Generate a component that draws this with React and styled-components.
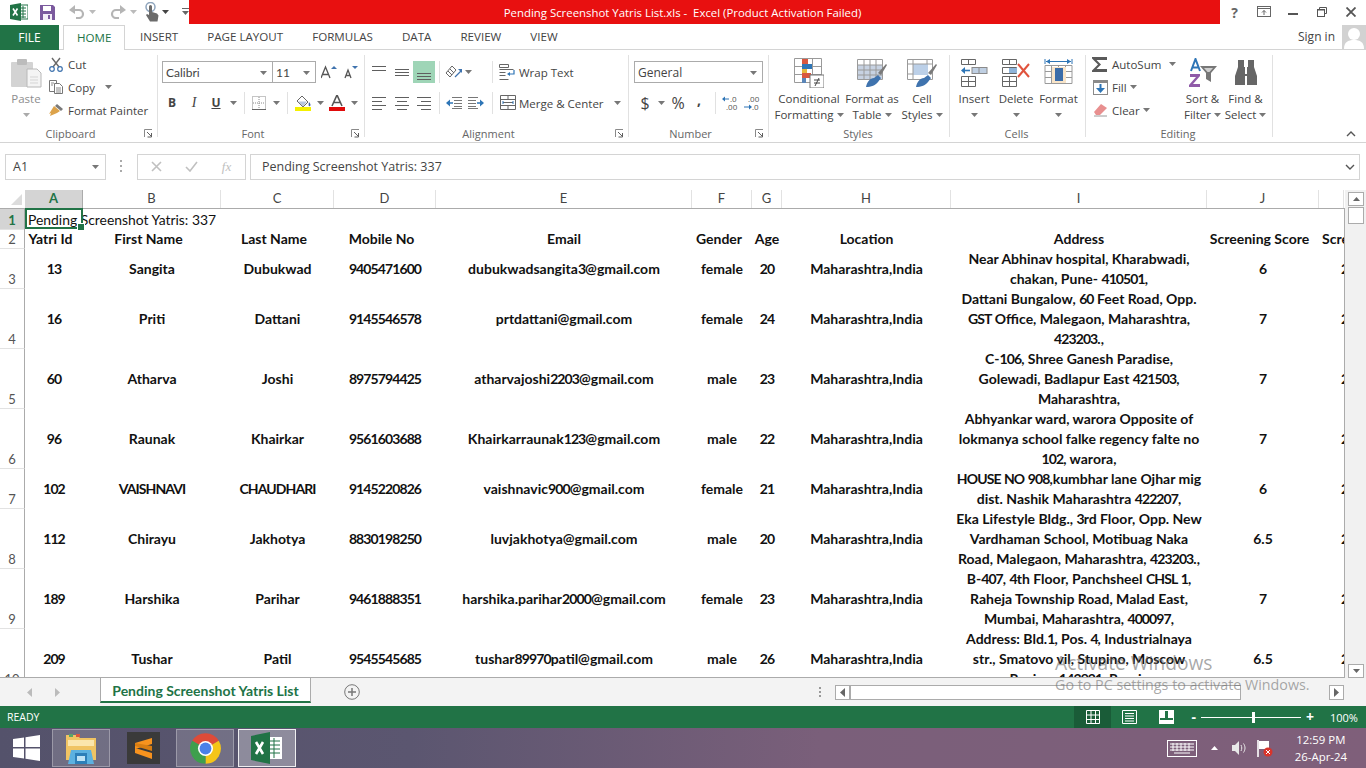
import React from 'react';
import styled, { createGlobalStyle } from 'styled-components';

const GREEN = '#217346';
const UI_FONT = '"Open Sans", "Noto Sans", sans-serif';
const CELL_FONT = 'Lato, "Liberation Sans", sans-serif';

const GlobalStyle = createGlobalStyle`
    html, body {
        margin: 0;
        padding: 0;
        background: #fff;
        overflow: hidden;
    }
    * {
        box-sizing: border-box;
    }
    svg {
        display: block;
        flex: none;
    }
`;

const Page = styled.div`
    position: relative;
    display: flex;
    flex-direction: column;
    width: 1366px;
    height: 768px;
    overflow: hidden;
    font-family: ${UI_FONT};
    font-size: 11.5px;
    color: #444;
`;

/* title bar */
const TitleBar = styled.div`
    display: flex;
    height: 25px;
`;

const QuickAccess = styled.div`
    display: flex;
    align-items: center;
    width: 189px;
    padding-left: 10px;
`;

const QuickSlot = styled.div`
    display: flex;
    justify-content: center;
    width: ${(p) => p.$w}px;
    margin-left: ${(p) => p.$ml || 0}px;
`;

const RedTitle = styled.div`
    width: 1031px;
    height: 24px;
    padding-right: 44px;
    background: #e81010;
    color: #fff;
    font-size: 11.4px;
    line-height: 26px;
    text-align: center;
    white-space: pre;
`;

const WindowButtons = styled.div`
    display: flex;
    align-items: center;
`;

const WindowButton = styled.div`
    display: flex;
    justify-content: center;
    width: 29px;
`;

/* tabs */
const TabBar = styled.div`
    display: flex;
    align-items: stretch;
    height: 25px;
    border-bottom: 1px solid #d4d4d4;
`;

const FileTab = styled.div`
    width: 59px;
    height: 25px;
    background: ${GREEN};
    color: #fff;
    font-size: 12px;
    line-height: 25px;
    text-align: center;
`;

const Tab = styled.div`
    height: 25px;
    padding: 0 ${(p) => (p.$active ? 13 : 14.5)}px;
    line-height: 24px;
    font-size: 11.6px;
    white-space: nowrap;
    color: ${(p) => (p.$active ? GREEN : '#444')};
    background: ${(p) => (p.$active ? '#fff' : 'transparent')};
    border: solid #d4d4d4;
    border-width: ${(p) => (p.$active ? '1px 1px 0 1px' : '0')};
    margin-left: ${(p) => p.$ml || 0}px;
`;

const SignIn = styled.div`
    display: flex;
    align-items: center;
    gap: 7px;
    margin-left: auto;
    font-size: 12px;
`;

/* ribbon */
const Ribbon = styled.div`
    display: flex;
    height: 93px;
    border-bottom: 1px solid #d4d4d4;
`;

const Group = styled.div`
    display: flex;
    flex-direction: column;
    width: ${(p) => p.$w}px;
    padding-top: 3px;
`;

const GroupBody = styled.div`
    display: flex;
    height: 73px;
    padding-left: ${(p) => p.$pl || 0}px;
`;

const GroupFooter = styled.div`
    display: grid;
    grid-template-columns: ${(p) => (p.$launcher ? '1fr 14px' : '1fr')};
    align-items: center;
    justify-items: center;
    height: 16px;
    padding-right: 2px;
    color: #666;
    text-align: center;
    font-size: 11px;
`;

const GroupSep = styled.div`
    width: 1px;
    height: 82px;
    margin-top: 5px;
    background: #e1e1e1;
`;

const Collapse = styled.div`
    align-self: flex-end;
    margin: 0 10px 5px auto;
`;

const LargeButton = styled.div`
    display: flex;
    flex-direction: column;
    align-items: center;
    width: ${(p) => p.$w}px;
    padding-top: 5px;
    line-height: 16px;
    white-space: nowrap;
    color: ${(p) => (p.$muted ? '#8e8e8e' : '#444')};
`;

const LargeIcon = styled.div`
    display: flex;
    align-items: center;
    justify-content: center;
    height: 30px;
    margin-bottom: 3px;
`;

const LargeCaption = styled.div`
    display: flex;
    align-items: center;
    justify-content: center;
    height: 16px;
`;

const SmallStack = styled.div`
    display: flex;
    flex-direction: column;
    width: ${(p) => p.$w}px;
`;

const SmallRow = styled.div`
    display: flex;
    align-items: center;
    height: 23px;
    white-space: nowrap;
`;

const SmallIcon = styled.div`
    display: flex;
    justify-content: center;
    width: ${(p) => p.$w || 18}px;
    margin-right: ${(p) => p.$mr || 0}px;
`;

const ToolRows = styled.div`
    display: flex;
    flex-direction: column;
    gap: 9px;
    padding-top: 8px;
`;

const ToolRow = styled.div`
    display: flex;
    align-items: center;
    height: 22px;
    white-space: nowrap;
`;

const Tool = styled.div`
    display: flex;
    align-items: center;
    justify-content: center;
    width: ${(p) => p.$w || 22}px;
    height: 22px;
    margin-left: ${(p) => p.$ml || 0}px;
    padding-bottom: ${(p) => p.$pb || 0}px;
    background: ${(p) => (p.$on ? '#9fd5b7' : 'transparent')};
    color: ${(p) => p.$c || '#444'};
    font-size: ${(p) => p.$fs || 12}px;
    font-weight: ${(p) => (p.$bold ? 700 : 400)};
    font-style: ${(p) => (p.$italic ? 'italic' : 'normal')};
    text-decoration: ${(p) => (p.$under ? 'underline' : 'none')};
    font-family: ${(p) => (p.$serif ? '"Liberation Serif", serif' : 'inherit')};
`;

const ToolSep = styled.div`
    width: 1px;
    height: 22px;
    margin-left: ${(p) => p.$ml || 0}px;
    background: #e1e1e1;
`;

const Slot = styled.div`
    display: flex;
    width: ${(p) => p.$w}px;
    margin-left: ${(p) => p.$ml || 0}px;
`;

const ToolText = styled.span`
    margin-left: ${(p) => p.$ml || 0}px;
    padding-top: 2px;
`;

const Combo = styled.div`
    display: flex;
    align-items: center;
    justify-content: space-between;
    width: ${(p) => p.$w}px;
    height: 22px;
    margin-left: ${(p) => p.$ml || 0}px;
    padding: 2px 5px 0 3px;
    background: #fff;
    border: 1px solid #ababab;
    font-family: ${(p) => (p.$cell ? CELL_FONT : UI_FONT)};
    font-size: 12px;
`;

/* formula bar */
const FormulaRow = styled.div`
    display: flex;
    align-items: flex-start;
    height: 48px;
    padding: 11px 6px 0 5px;
`;

const NameBox = styled.div`
    display: flex;
    align-items: center;
    justify-content: space-between;
    width: 101px;
    height: 26px;
    padding: 0 6px 0 7px;
    border: 1px solid #d4d4d4;
    font-size: 12.5px;
`;

const FormulaDots = styled.div`
    display: flex;
    justify-content: center;
    width: 31px;
    padding-top: 6px;
`;

const FormulaButtons = styled.div`
    display: grid;
    grid-template-columns: repeat(3, 1fr);
    align-items: center;
    justify-items: center;
    width: 109px;
    height: 26px;
    padding: 0 1px;
    border: 1px solid #d4d4d4;
    color: #c0c0c0;
`;

const FxLabel = styled.span`
    font-family: "Liberation Serif", serif;
    font-style: italic;
    font-size: 13px;
`;

const FormulaInput = styled.div`
    flex: 1;
    display: flex;
    align-items: center;
    justify-content: space-between;
    height: 26px;
    margin-left: 4px;
    padding: 0 4px 0 11px;
    border: 1px solid #d4d4d4;
    font-size: 12.5px;
    color: #444;
`;

/* sheet */
const COLUMNS = '25px 58px 138px 113px 102px 256px 60px 30px 169px 256px 112px 25px';

const SheetArea = styled.div`
    display: flex;
    height: 488px;
`;

const GridWrap = styled.div`
    display: flex;
    flex-direction: column;
    width: 1345px;
`;

const HeaderRow = styled.div`
    display: grid;
    grid-template-columns: ${COLUMNS};
    height: 19px;
    flex: none;
    border-bottom: 1px solid #ababab;
`;

const Corner = styled.div`
    display: flex;
    align-items: flex-end;
    justify-content: flex-end;
    padding: 0 3px 3px 0;
`;

const ColHead = styled.div`
    height: 18px;
    line-height: 17px;
    text-align: center;
    font-family: ${CELL_FONT};
    font-size: 13px;
    font-weight: ${(p) => (p.$on ? 700 : 400)};
    color: ${(p) => (p.$on ? GREEN : '#444')};
    background: ${(p) => (p.$on ? '#d4d4d4' : 'transparent')};
    border-right: 1px solid ${(p) => (p.$on ? '#ababab' : '#e2e2e2')};
    box-shadow: ${(p) => (p.$on ? `0 1px 0 ${GREEN}` : 'none')};
`;

const SheetBody = styled.div`
    position: relative;
    flex: 1;
    overflow: hidden;
    background: linear-gradient(#ababab, #ababab) no-repeat 24px 0 / 1px 100%;
    border-right: 1px solid #ababab;
    border-bottom: 1px solid #ababab;
`;

const Row = styled.div`
    display: grid;
    grid-template-columns: ${COLUMNS};
    height: ${(p) => p.$h}px;
`;

const RowHead = styled.div`
    display: flex;
    align-items: flex-end;
    justify-content: center;
    height: 100%;
    line-height: 18px;
    font-family: ${CELL_FONT};
    font-size: 13px;
    font-weight: ${(p) => (p.$on ? 700 : 400)};
    color: ${(p) => (p.$on ? GREEN : '#555')};
    background: ${(p) => (p.$on ? '#d4d4d4' : 'transparent')};
    border-bottom: 1px solid #e2e2e2;
    border-right: 1px solid #ababab;
`;

const Cell = styled.div`
    display: flex;
    align-items: center;
    justify-content: ${(p) => (p.$start ? 'flex-start' : 'center')};
    padding-left: ${(p) => p.$pl || 0}px;
    padding-right: ${(p) => p.$nudge || 0}px;
    overflow: hidden;
    text-align: center;
    white-space: nowrap;
    font-family: ${CELL_FONT};
    font-size: 14px;
    font-weight: 700;
    line-height: 20px;
    color: #111;
`;

/* Lato's digits and capitals run wider than the sheet font's */
const Tight = styled.span`
    letter-spacing: -0.9px;
`;

const TitleCell = styled.div`
    grid-column: 2 / -1;
    padding-left: 3px;
    font-family: ${CELL_FONT};
    font-size: 13.9px;
    line-height: 21px;
    color: #111;
`;

const Selection = styled.div`
    position: absolute;
    left: 25px;
    top: 0;
    width: 58px;
    height: 20px;
    border: 2px solid ${GREEN};
    border-top-width: 1px;
    &::after {
        content: '';
        position: absolute;
        right: -4px;
        bottom: -4px;
        width: 6px;
        height: 6px;
        background: ${GREEN};
        border: 1px solid #fff;
    }
`;

const ScrollCol = styled.div`
    display: flex;
    flex-direction: column;
    width: 21px;
    padding: 2px 2px 0 3px;
    background: #f1f1f1;
`;

const ScrollBtn = styled.div`
    display: flex;
    align-items: center;
    justify-content: center;
    width: 16px;
    height: ${(p) => p.$h || 14}px;
    background: #fff;
    border: 1px solid #ababab;
    margin-top: ${(p) => (p.$end ? 'auto' : '0')};
    margin-bottom: ${(p) => (p.$end ? '0' : '1px')};
`;

/* sheet tabs */
const SheetTabs = styled.div`
    display: flex;
    align-items: flex-start;
    height: 28px;
    background: #f3f3f3;
`;

const NavArrows = styled.div`
    display: flex;
    align-items: center;
    gap: 23px;
    width: 100px;
    height: 28px;
    padding-left: 27px;
`;

const SheetTab = styled.div`
    width: 211px;
    height: 25px;
    background: #fff;
    border: solid #ababab;
    border-width: 0 1px;
    border-bottom: 2px solid ${GREEN};
    color: ${GREEN};
    font-family: ${CELL_FONT};
    font-size: 14px;
    font-weight: 700;
    line-height: 25px;
    text-align: center;
`;

const AddSheet = styled.div`
    margin: 6px 0 0 33px;
`;

const TabDots = styled.div`
    margin: 9px 0 0 459px;
`;

const HScroll = styled.div`
    display: flex;
    align-items: center;
    width: 509px;
    height: 15px;
    margin: 7px 0 0 13px;
`;

const HBtn = styled.div`
    display: flex;
    align-items: center;
    justify-content: center;
    width: 15px;
    height: 15px;
    background: #fff;
    border: 1px solid #ababab;
`;

const HThumb = styled.div`
    width: 391px;
    height: 15px;
    background: #fff;
    border: 1px solid #ababab;
    margin-right: auto;
`;

/* status bar */
const StatusBar = styled.div`
    display: flex;
    align-items: center;
    height: 22px;
    padding-left: 7px;
    background: ${GREEN};
    color: #fff;
    font-size: 10.5px;
`;

const ViewButton = styled.div`
    display: flex;
    align-items: center;
    justify-content: center;
    width: 37px;
    height: 22px;
    margin-left: ${(p) => p.$ml || 0}px;
    background: ${(p) => (p.$on ? '#1a5c38' : 'transparent')};
`;

const ZoomSlider = styled.div`
    display: flex;
    align-items: center;
    gap: 5px;
    margin-left: 6px;
`;

const ZoomTrack = styled.div`
    position: relative;
    width: 100px;
    height: 1px;
    background: #fff;
    &::after {
        content: '';
        position: absolute;
        left: 51px;
        top: -5px;
        width: 3px;
        height: 11px;
        background: #fff;
    }
`;

const ZoomSign = styled.span`
    font-size: 14px;
    line-height: 14px;
    font-weight: 700;
`;

const ZoomValue = styled.span`
    margin-left: 16px;
    font-size: 11px;
`;

/* taskbar */
const Taskbar = styled.div`
    display: flex;
    align-items: center;
    height: 40px;
    background: linear-gradient(90deg, #54526b 0%, #5b5670 30%, #7a5f7a 60%, #7f5f7a 100%);
    color: #fff;
`;

const StartSlot = styled.div`
    display: flex;
    justify-content: center;
    width: 52px;
`;

const TaskButton = styled.div`
    display: flex;
    align-items: center;
    justify-content: center;
    width: 58px;
    height: 38px;
    margin-left: ${(p) => p.$ml || 0}px;
    background: ${(p) => (p.$active ? 'rgba(255,255,255,.32)' : p.$open ? 'rgba(255,255,255,.16)' : 'transparent')};
    border: 1px solid ${(p) => (p.$active ? 'rgba(255,255,255,.85)' : p.$open ? 'rgba(255,255,255,.3)' : 'transparent')};
`;

const Tray = styled.div`
    display: flex;
    align-items: center;
    margin-left: auto;
    padding-right: 19px;
`;

const TraySlot = styled.div`
    display: flex;
    justify-content: center;
    margin-left: ${(p) => p.$ml || 0}px;
`;

const Clock = styled.div`
    margin-left: 22px;
    text-align: center;
    font-size: 11.4px;
    line-height: 17px;
`;

const Watermark = styled.div`
    position: absolute;
    left: 1055px;
    top: 651px;
    color: rgba(110, 110, 110, 0.6);
    white-space: nowrap;
    pointer-events: none;
`;

const WatermarkTitle = styled.div`
    font-size: 19.2px;
    line-height: 24px;
`;

const WatermarkText = styled.div`
    font-size: 14.3px;
    line-height: 20px;
`;

/* icons */
const Caret = ({ c = '#777', up }) => (
    <svg width="7" height="4" viewBox="0 0 7 4">
        <path d={up ? 'M0 4L3.5 0 7 4z' : 'M0 0h7L3.5 4z'} fill={c} />
    </svg>
);

const Lines = ({ rows, w = 16, h = 16, c = '#5f5f5f' }) => (
    <svg width={w} height={h} viewBox={`0 0 ${w} ${h}`}>
        {rows.map(([a, b, y], i) => (
            <path key={i} d={`M${a} ${y + 0.5}H${b}`} stroke={c} />
        ))}
    </svg>
);

const Launcher = () => (
    <svg width="9" height="9" viewBox="0 0 9 9" fill="none">
        <path d="M.5 8V.5H8" stroke="#8a8a8a" />
        <path d="M3 3l4 4M7.5 4v4h-4" stroke="#5f5f5f" />
    </svg>
);

const ExcelMini = () => (
    <svg width="18" height="18" viewBox="0 0 18 18">
        <rect x="8" y="2" width="10" height="14" fill="#fff" stroke={GREEN} />
        <path d="M10 5h6M10 8h6M10 11h6M10 14h6M13 3v12" stroke={GREEN} />
        <path d="M0 2l11-2v18L0 16z" fill={GREEN} />
        <path d="M3 5.5l4.5 7M7.5 5.5l-4.5 7" stroke="#fff" strokeWidth="1.6" />
    </svg>
);

const SaveIcon = () => (
    <svg width="15" height="15" viewBox="0 0 15 15">
        <path d="M0 0h13l2 2v13H0z" fill="#7b5a9e" />
        <rect x="3" y="1" width="8" height="5" fill="#fff" />
        <rect x="3" y="9" width="9" height="6" fill="#f3eef7" />
        <rect x="8" y="10" width="2" height="4" fill="#7b5a9e" />
    </svg>
);

const UndoIcon = ({ flip }) => (
    <svg width="16" height="14" viewBox="0 0 16 14" fill="none" style={flip ? { transform: 'scaleX(-1)' } : undefined}>
        <path d="M3 5h7a4 4 0 0 1 0 8H7" stroke="#b5b5b5" strokeWidth="2.2" />
        <path d="M6 0v9L0 5z" fill="#b5b5b5" />
    </svg>
);

const TouchIcon = () => (
    <svg width="15" height="20" viewBox="0 0 15 20">
        <circle cx="5.5" cy="5" r="4.5" fill="none" stroke="#8fa5bd" strokeWidth="1.5" />
        <path d="M4 4.5a1.5 1.5 0 0 1 3 0V10l5 1.5 1.5 2-1 6H5L1 13l1-1 2 1z" fill="#6b6b6b" />
    </svg>
);

const QatMore = () => (
    <svg width="7" height="8" viewBox="0 0 7 8">
        <path d="M0 .5h7" stroke="#666" />
        <path d="M0 3h7L3.5 7z" fill="#666" />
    </svg>
);

const RibbonDisplay = () => (
    <svg width="14" height="12" viewBox="0 0 14 12" fill="none">
        <rect x=".5" y=".5" width="13" height="10" stroke="#666" />
        <path d="M0 2.5h14" stroke="#666" />
        <path d="M7 9V4.5M5 6.5l2-2 2 2" stroke="#666" />
    </svg>
);

const MinIcon = () => (
    <svg width="10" height="10" viewBox="0 0 10 10">
        <path d="M0 7h10" stroke="#555" strokeWidth="2" />
    </svg>
);

const RestoreIcon = () => (
    <svg width="10" height="10" viewBox="0 0 10 10" fill="none">
        <path d="M2.5 2.5V.5h7v6h-2" stroke="#555" />
        <rect x=".5" y="2.5" width="7" height="7" stroke="#555" />
        <path d="M0 3h8" stroke="#555" />
    </svg>
);

const CloseIcon = () => (
    <svg width="10" height="10" viewBox="0 0 10 10">
        <path d="M.5.5l9 9M9.5.5l-9 9" stroke="#555" strokeWidth="1.8" />
    </svg>
);

const Avatar = () => (
    <svg width="24" height="24" viewBox="0 0 24 24">
        <rect width="24" height="24" fill="#d2d2d2" />
        <circle cx="12" cy="9" r="6" fill="#fff" />
        <path d="M2 24c0-7 4-9 10-9s10 2 10 9z" fill="#fff" />
    </svg>
);

const PasteIcon = () => (
    <svg width="32" height="30" viewBox="0 0 32 30">
        <rect x="1" y="4" width="22" height="25" rx="1" fill="#d3d3d3" />
        <rect x="7" y="1" width="10" height="6" rx="1" fill="#bcbcbc" />
        <path d="M17 11h10l4 4v14H17z" fill="#f4f4f4" stroke="#b8b8b8" />
        <path d="M20 19h8M20 22h8M20 25h8" stroke="#d5d5d5" />
    </svg>
);

const CutIcon = () => (
    <svg width="14" height="15" viewBox="0 0 14 15" fill="none">
        <path d="M3 1l7 9M11 1L4 10" stroke="#6a6a6a" strokeWidth="1.4" />
        <circle cx="3" cy="12" r="2.3" stroke="#3f73ae" strokeWidth="1.2" />
        <circle cx="11" cy="12" r="2.3" stroke="#3f73ae" strokeWidth="1.2" />
    </svg>
);

const CopyIcon = () => (
    <svg width="15" height="14" viewBox="0 0 15 14" fill="#fff">
        <path d="M.5.5h7v11h-7z" stroke="#777" />
        <path d="M5.5 3.5h5l3 3v7h-8z" stroke="#777" />
        <path d="M7 8h5M7 10h5M7 12h5M2 3h3M2 5h2" stroke="#8a8a8a" />
    </svg>
);

const PainterIcon = () => (
    <svg width="16" height="14" viewBox="0 0 16 14">
        <path d="M9 1l6 5-2 2-6-5z" fill="#7a7a7a" />
        <path d="M6 3l6 5-3 2-7 3 1-3-2 1z" fill="#dca24a" />
    </svg>
);

const GrowIcon = ({ down }) => (
    <svg width="16" height="14" viewBox="0 0 16 14" fill="none">
        <path d={down ? 'M2 13l3-8 3 8M3 10.5h4' : 'M0 13l4.5-11L9 13M2 9.5h5'} stroke="#555" strokeWidth="1.3" />
        <path d={down ? 'M9 1h6l-3 3z' : 'M10 4l3-3 3 3z'} fill="#3f73ae" />
    </svg>
);

const BorderIcon = () => (
    <svg width="14" height="14" viewBox="0 0 14 14" fill="none">
        <path d="M.5.5h13v13H.5zM7 1v12M1 7h12" stroke="#8a8a8a" strokeDasharray="1 1" />
        <path d="M0 13.5h14" stroke="#666" />
    </svg>
);

const FillIcon = () => (
    <svg width="17" height="16" viewBox="0 0 17 16">
        <path d="M7 1l6 6-5 5-6-6z" fill="#fff" stroke="#666" />
        <path d="M3 6.5h9L8 11.5z" fill="#b9c7e0" />
        <path d="M14 7c1.5 2 2 3 1 4s-2 0-1-4z" fill="#3f62a8" />
        <rect y="12" width="16" height="4" fill="#f4f000" />
    </svg>
);

const FontColorIcon = () => (
    <svg width="16" height="16" viewBox="0 0 16 16" fill="none">
        <path d="M3 11L8 0l5 11M5 7.5h6" stroke="#555" strokeWidth="1.6" />
        <rect y="12" width="16" height="4" fill="#e00b0b" />
    </svg>
);

const OrientIcon = () => (
    <svg width="18" height="16" viewBox="0 0 18 16" fill="none">
        <path d="M1 9l6-7 4 4-6 7zM3 7l4 4M5 5l4 4" stroke="#666" />
        <path d="M10 13l6-6" stroke="#3f73ae" strokeWidth="1.3" />
        <path d="M13 5h4v4z" fill="#3f73ae" />
    </svg>
);

const IndentIcon = ({ flip }) => (
    <svg width="16" height="12" viewBox="0 0 16 12" fill="none" style={flip ? { transform: 'scaleX(-1)' } : undefined}>
        <path d="M6 .5h10M8 3.5h8M8 6.5h8M8 9.5h8M6 11.5h10" stroke="#777" />
        <path d="M1 6h6" stroke="#2e75b6" strokeWidth="1.5" />
        <path d="M4 2.5L0 6l4 3.5z" fill="#2e75b6" />
    </svg>
);

const WrapIcon = () => (
    <svg width="17" height="16" viewBox="0 0 17 16" fill="none">
        <path d="M.5.5h9v3h-9zM.5 5.5h14M.5 8.5h6M.5 11.5h6M.5 15.5h9" stroke="#666" />
        <path d="M15 6v4h-5" stroke="#2e75b6" strokeWidth="1.2" />
        <path d="M11 8L8 10l3 2z" fill="#2e75b6" />
    </svg>
);

const MergeIcon = () => (
    <svg width="16" height="15" viewBox="0 0 16 15" fill="none">
        <path d="M.5.5h15v14H.5zM1 4.5h14M1 10.5h14M8 1v3M8 11v3M3 7.5h10" stroke="#666" />
        <path d="M3 6v3M13 6v3" stroke="#2e75b6" />
    </svg>
);

const DecimalIcon = ({ more }) => (
    <svg width="20" height="16" viewBox="0 0 20 16" overflow="visible" fontFamily={UI_FONT} fontSize="8" fill="#555">
        <text x={more ? 6 : 10} y="7">{more ? '.00' : '.0'}</text>
        <text x={more ? 10 : 6} y="15">{more ? '.0' : '.00'}</text>
        <path d={more ? 'M2 12h6' : 'M3 4h6'} stroke="#2e75b6" />
        <path d={more ? 'M7 9.5l3 2.5-3 2.5z' : 'M5 1.5L2 4l3 2.5z'} fill="#2e75b6" />
    </svg>
);

const CondFormatIcon = () => (
    <svg width="30" height="30" viewBox="0 0 30 30">
        <path d="M.5.5h27v24H.5zM9.5.5v24M18.5.5v24M.5 8.5h27M.5 16.5h27" fill="#fff" stroke="#9a9a9a" />
        <rect x="8" y="1" width="6" height="5" fill="#d9573f" />
        <rect x="8" y="6" width="10" height="5" fill="#2e75b6" />
        <rect x="8" y="11" width="5" height="5" fill="#e6b73c" />
        <rect x="8" y="15" width="9" height="5" fill="#d9573f" />
        <rect x="8" y="20" width="4" height="5" fill="#5b86b8" />
        <rect x="16" y="17" width="14" height="13" fill="#fff" stroke="#777" />
        <path d="M20 22h6M20 25h6M25 20l-4 8" stroke="#444" />
    </svg>
);

const TableStyleIcon = ({ cell }) => (
    <svg width="30" height="30" viewBox="0 0 30 30">
        <path d="M.5 1.5h25v20H.5z" fill="#fff" stroke="#9a9a9a" />
        {cell ? (
            <>
                <rect x="6" y="6" width="15" height="11" fill="#bcd0e8" />
                <path d="M6 1v20M20 1v5M1 6h24M1 16h5" stroke="#9a9a9a" fill="none" />
            </>
        ) : (
            <>
                <rect x="1" y="7" width="24" height="14" fill="#c7d2e2" />
                <path d="M7 2v19M13 2v19M19 2v19M1 7h24M1 12h24M1 17h24" stroke="#9a9a9a" fill="none" />
            </>
        )}
        <path d="M21 15l8-9 1 1-6 10z" fill="#7a7a7a" />
        <path d="M9 29c1-5 4-9 8-9l4-3 3 3-3 4c-2 3-7 5-12 5z" fill="#3f73ae" />
    </svg>
);

const InsertIcon = () => (
    <svg width="28" height="30" viewBox="0 0 28 30" fill="none">
        <path d="M1.5 1.5h14v5h-14zM8.5 1.5v5M1.5 18.5h14v10h-14zM8.5 18.5v10M1.5 23.5h14" stroke="#666" />
        <rect x="12" y="9.5" width="15" height="6" fill="#bfcfe2" stroke="#8a8a8a" />
        <path d="M19 10v5" stroke="#8a8a8a" />
        <path d="M3 12.5h7" stroke="#2e75b6" strokeWidth="1.6" />
        <path d="M5 9L1 12.5 5 16z" fill="#2e75b6" />
    </svg>
);

const DeleteIcon = () => (
    <svg width="30" height="30" viewBox="0 0 30 30" fill="none">
        <path d="M1.5 1.5h14v5h-14zM8.5 1.5v5M1.5 18.5h14v10h-14zM8.5 18.5v10M1.5 23.5h14M1.5 9.5h14v6h-14z" stroke="#666" />
        <rect x="8" y="10" width="8" height="5" fill="#8fb4d9" />
        <path d="M17 6l11 13M28 6L17 19" stroke="#e0533d" strokeWidth="2" />
    </svg>
);

const FormatIcon = () => (
    <svg width="30" height="30" viewBox="0 0 30 30" fill="none">
        <path d="M1 7.5h27v18H1zM7.5 8v17M14.5 8v17M21.5 8v17M1 13.5h27M1 19.5h27" stroke="#9a9a9a" />
        <rect x="8" y="9" width="14" height="16" fill="#f8e4c8" />
        <rect x="11" y="10" width="8" height="13" fill="#3b6ca8" />
        <path d="M1 1v5M28 1v5" stroke="#2e75b6" />
        <path d="M2 3.5h25" stroke="#2e75b6" />
        <path d="M2 3.5L6 1v5zM27 3.5L23 1v5z" fill="#2e75b6" />
    </svg>
);

const SigmaIcon = () => (
    <svg width="16" height="15" viewBox="0 0 16 15">
        <path d="M0 0h15v3H4.5L9 7.5 4.5 12H15v3H0v-1.500L6 7.5 0 1.500z" fill="#5a5a5a" />
    </svg>
);

const FillDownIcon = () => (
    <svg width="15" height="15" viewBox="0 0 15 15">
        <rect x=".5" y=".5" width="14" height="14" fill="#fff" stroke="#8a8a8a" />
        <rect width="15" height="3" fill="#8a8a8a" />
        <path d="M7.5 4v7" stroke="#2e75b6" strokeWidth="2" />
        <path d="M3 8l4.5 5L12 8z" fill="#2e75b6" />
    </svg>
);

const EraserIcon = () => (
    <svg width="15" height="14" viewBox="0 0 15 14">
        <path d="M1 9l7-8 6 4-7 7H3z" fill="#e88f8f" />
        <path d="M1 13h13" stroke="#9a9a9a" />
    </svg>
);

const SortFilterIcon = () => (
    <svg width="30" height="30" viewBox="0 0 30 30">
        <path d="M3 13L7.5 1 12 13M4.5 9.5h6" fill="none" stroke="#2e75b6" strokeWidth="2" />
        <path d="M2 16h10v2l-7 8h7v3H1v-2l7-8H2z" fill="#8f5aa8" />
        <path d="M12 8h17l-6 7v9l-5-3v-6z" fill="#777" />
        <path d="M16 10h9l-3.5 4h-2z" fill="#cfcfcf" />
    </svg>
);

const FindIcon = () => (
    <svg width="26" height="26" viewBox="0 0 26 26">
        <path d="M5 0h6v7h1v7h2V7h1V0h6v7l3 9v9H14v-9h-2v9H2v-9l3-9z" fill="#666" />
    </svg>
);

const SmallGridIcon = ({ c = '#fff' }) => (
    <svg width="14" height="14" viewBox="0 0 14 14" fill="none">
        <path d="M.5.5h13v13H.5zM5 1v12M9.5 1v12M1 5h12M1 9.5h12" stroke={c} />
    </svg>
);

const PageLayoutIcon = () => (
    <svg width="15" height="14" viewBox="0 0 15 14" fill="none">
        <path d="M.5.5h14v13H.5z" stroke="#fff" />
        <path d="M3 3.5h9M3 6h9M3 8.5h9M3 11h9" stroke="#fff" />
    </svg>
);

const PageBreakIcon = () => (
    <svg width="15" height="14" viewBox="0 0 15 14">
        <path d="M0 0h6v8H0zM9 0h6v8H9zM0 10h15v4H0z" fill="#fff" />
        <rect x=".5" y=".5" width="14" height="13" fill="none" stroke="#fff" />
    </svg>
);

const WinLogo = () => (
    <svg width="27" height="26" viewBox="0 0 27 26">
        <path d="M0 4l11-1.600V12H0zM12.500 2.200L27 0v12H12.500zM0 13.500h11v10L0 22zM12.500 13.500H27V26l-14.500-2.200z" fill="#fff" />
    </svg>
);

const ExplorerIcon = () => (
    <svg width="32" height="31" viewBox="0 0 32 31">
        <path d="M1 2h11l3 3h16v22H1z" fill="#f0c463" />
        <rect x="4" y="1" width="4" height="3" fill="#5aa469" />
        <rect x="11" y="1" width="4" height="3" fill="#d9573f" />
        <rect x="3" y="7" width="26" height="6" fill="#fbe6ac" />
        <path d="M6 17h20l3 14H3z" fill="#5cb1e0" />
        <rect x="10" y="20" width="12" height="11" fill="#2d7fb8" />
        <rect x="12" y="23" width="8" height="5" fill="#bfe3f5" />
    </svg>
);

const SublimeIcon = () => (
    <svg width="33" height="32" viewBox="0 0 33 32">
        <rect width="33" height="32" fill="#3a3a3a" />
        <path d="M8 11l17-5v6L8 17zM8 16l17 5v6L8 21z" fill="#f7931e" />
        <path d="M8 14l17 5v-5L8 11z" fill="#d97e12" />
    </svg>
);

const ChromeIcon = () => (
    <svg width="33" height="33" viewBox="0 0 28 28">
        <path d="M14 14L2.74 7.5A13 13 0 0 1 25.26 7.5z" fill="#dd4b39" />
        <path d="M14 14L25.26 7.5A13 13 0 0 1 14 27z" fill="#f5c518" />
        <path d="M14 14V27A13 13 0 0 1 2.74 7.5z" fill="#3e9f4d" />
        <circle cx="14" cy="14" r="6.4" fill="#fff" />
        <circle cx="14" cy="14" r="5" fill="#4a80e8" />
    </svg>
);

const ExcelTaskIcon = () => (
    <svg width="32" height="32" viewBox="0 0 32 32">
        <rect x="15" y="5" width="16" height="22" fill="#fff" />
        <path d="M18 9h11M18 13h11M18 17h11M18 21h11M23 6v20" stroke={GREEN} />
        <path d="M0 4l19-4v32L0 28z" fill={GREEN} />
        <path d="M5 10l7 12M12 10L5 22" stroke="#fff" strokeWidth="2.6" />
    </svg>
);

const KeyboardIcon = () => (
    <svg width="30" height="17" viewBox="0 0 30 17" fill="none">
        <rect x=".5" y=".5" width="29" height="16" stroke="#fff" />
        <path d="M3 4h24M3 7h24M3 10h24M7 13h16M6 3v8M10 3v8M14 3v8M18 3v8M22 3v8" stroke="#fff" />
    </svg>
);

const SpeakerIcon = () => (
    <svg width="15" height="14" viewBox="0 0 15 14" fill="none">
        <path d="M0 4h3l4-4v14l-4-4H0z" fill="#e8e8e8" />
        <path d="M9 4c1 2 1 4 0 6M11.5 2.5c2 3 2 6 0 9" stroke="#e8e8e8" />
    </svg>
);

const FlagIcon = () => (
    <svg width="16" height="17" viewBox="0 0 16 17">
        <path d="M1 0v17" stroke="#fff" strokeWidth="1.6" />
        <path d="M2 1h10v8H2z" fill="#fff" />
        <circle cx="11" cy="12" r="4.5" fill="#d9342b" />
        <path d="M9 10l4 4M13 10l-4 4" stroke="#fff" />
    </svg>
);

/* data */
const COLUMN_LETTERS = ['A', 'B', 'C', 'D', 'E', 'F', 'G', 'H', 'I', 'J', ''];

const HEADERS = [
    ['Yatri Id', 7], ['First Name', 7], ['Last Name', 7], ['Mobile No', 7], ['Email', 0],
    ['Gender', 6], ['Age', 0], ['Location', 0], ['Address', 0], ['Screening Score', 7],
];

const ROWS = [
    { h: 40, id: '13', first: 'Sangita', last: 'Dubukwad', mobile: '9405471600', email: 'dubukwadsangita3@gmail.com', gender: 'female', age: '20', address: ['Near Abhinav hospital, Kharabwadi,', 'chakan, Pune- 410501,'], score: '6' },
    { h: 60, id: '16', first: 'Priti', last: 'Dattani', mobile: '9145546578', email: 'prtdattani@gmail.com', gender: 'female', age: '24', address: ['Dattani Bungalow, 60 Feet Road, Opp.', 'GST Office, Malegaon, Maharashtra,', '423203.,'], score: '7' },
    { h: 60, id: '60', first: 'Atharva', last: 'Joshi', mobile: '8975794425', email: 'atharvajoshi2203@gmail.com', gender: 'male', age: '23', address: ['C-106, Shree Ganesh Paradise,', 'Golewadi, Badlapur East 421503,', 'Maharashtra,'], score: '7' },
    { h: 60, id: '96', first: 'Raunak', last: 'Khairkar', mobile: '9561603688', email: 'Khairkarraunak123@gmail.com', gender: 'male', age: '22', address: ['Abhyankar ward, warora Opposite of', 'lokmanya school falke regency falte no', '102, warora,'], score: '7' },
    { h: 40, id: '102', first: 'VAISHNAVI', last: 'CHAUDHARI', mobile: '9145220826', email: 'vaishnavic900@gmail.com', gender: 'female', age: '21', address: ['HOUSE NO 908,kumbhar lane Ojhar mig', 'dist. Nashik Maharashtra 422207,'], score: '6' },
    { h: 60, id: '112', first: 'Chirayu', last: 'Jakhotya', mobile: '8830198250', email: 'luvjakhotya@gmail.com', gender: 'male', age: '20', address: ['Eka Lifestyle Bldg., 3rd Floor, Opp. New', 'Vardhaman School, Motibuag Naka', 'Road, Malegaon, Maharashtra, 423203.,'], score: '6.5' },
    { h: 60, id: '189', first: 'Harshika', last: 'Parihar', mobile: '9461888351', email: 'harshika.parihar2000@gmail.com', gender: 'female', age: '23', address: ['B-407, 4th Floor, Panchsheel CHSL 1,', 'Raheja Township Road, Malad East,', 'Mumbai, Maharashtra, 400097,'], score: '7' },
    { h: 60, id: '209', first: 'Tushar', last: 'Patil', mobile: '9545545685', email: 'tushar89970patil@gmail.com', gender: 'male', age: '26', address: ['Address: Bld.1, Pos. 4, Industrialnaya', 'str., Smatovo vil, Stupino, Moscow', 'Region, 143921, Russia'], score: '6.5' },
];

const Fit = ({ text }) =>
    text.split(/(\d+|[A-Z]{2,})/).map((part, i) => (i % 2 ? <Tight key={i}>{part}</Tight> : part));

const DataRow = ({ row, index }) => (
    <Row $h={row.h}>
        <RowHead>{index}</RowHead>
        <Cell><Fit text={row.id} /></Cell>
        <Cell>{row.first === row.first.toUpperCase() ? <Fit text={row.first} /> : row.first}</Cell>
        <Cell><Fit text={row.last} /></Cell>
        <Cell><Fit text={row.mobile} /></Cell>
        <Cell><span><Fit text={row.email} /></span></Cell>
        <Cell>{row.gender}</Cell>
        <Cell><Fit text={row.age} /></Cell>
        <Cell>Maharashtra,India</Cell>
        <Cell>
            <div>
                {row.address.map((line) => (
                    <div key={line}><Fit text={line} /></div>
                ))}
            </div>
        </Cell>
        <Cell>{row.score}</Cell>
        <Cell $start $pl={22}>2</Cell>
    </Row>
);

const App = () => {
    return (
        <Page>
            <GlobalStyle />

            <TitleBar>
                <QuickAccess>
                    <ExcelMini />
                    <QuickSlot $w={15} $ml={12}><SaveIcon /></QuickSlot>
                    <QuickSlot $w={16} $ml={14}><UndoIcon /></QuickSlot>
                    <QuickSlot $w={8} $ml={4}><Caret c="#bbb" /></QuickSlot>
                    <QuickSlot $w={16} $ml={13}><UndoIcon flip /></QuickSlot>
                    <QuickSlot $w={8} $ml={4}><Caret c="#bbb" /></QuickSlot>
                    <QuickSlot $w={15} $ml={7}><TouchIcon /></QuickSlot>
                    <QuickSlot $w={8} $ml={2}><Caret c="#444" /></QuickSlot>
                    <QuickSlot $w={8} $ml={12}><QatMore /></QuickSlot>
                </QuickAccess>
                <RedTitle>{'Pending Screenshot Yatris List.xls -  Excel (Product Activation Failed)'}</RedTitle>
                <WindowButtons>
                    <WindowButton><Tool $w={12} $fs={14} $bold $c="#666">?</Tool></WindowButton>
                    <WindowButton><RibbonDisplay /></WindowButton>
                    <WindowButton><MinIcon /></WindowButton>
                    <WindowButton><RestoreIcon /></WindowButton>
                    <WindowButton><CloseIcon /></WindowButton>
                </WindowButtons>
            </TitleBar>

            <TabBar>
                <FileTab>FILE</FileTab>
                <Tab $active $ml={4}>HOME</Tab>
                <Tab>INSERT</Tab>
                <Tab>PAGE LAYOUT</Tab>
                <Tab>FORMULAS</Tab>
                <Tab>DATA</Tab>
                <Tab>REVIEW</Tab>
                <Tab>VIEW</Tab>
                <SignIn>Sign in <Avatar /></SignIn>
            </TabBar>

            <Ribbon>
                <Group $w={157}>
                    <GroupBody $pl={4}>
                        <LargeButton $w={44} $muted>
                            <LargeIcon><PasteIcon /></LargeIcon>
                            Paste
                            <LargeCaption><Caret c="#aaa" /></LargeCaption>
                        </LargeButton>
                        <SmallStack $w={108}>
                            <SmallRow><SmallIcon $w={16} $mr={4}><CutIcon /></SmallIcon>Cut</SmallRow>
                            <SmallRow><SmallIcon $w={16} $mr={4}><CopyIcon /></SmallIcon>Copy<Slot $w={8} $ml={10}><Caret /></Slot></SmallRow>
                            <SmallRow><SmallIcon $w={16} $mr={4}><PainterIcon /></SmallIcon>Format Painter</SmallRow>
                        </SmallStack>
                    </GroupBody>
                    <GroupFooter $launcher><span>Clipboard</span><Launcher /></GroupFooter>
                </Group>
                <GroupSep />

                <Group $w={206}>
                    <GroupBody $pl={4}>
                        <ToolRows>
                            <ToolRow>
                                <Combo $w={111} $cell>Calibri<Caret /></Combo>
                                <Combo $w={44} $ml={-1} $cell>11<Caret /></Combo>
                                <Tool $ml={2}><GrowIcon /></Tool>
                                <Tool><GrowIcon down /></Tool>
                            </ToolRow>
                            <ToolRow>
                                <Tool $ml={-1} $bold>B</Tool>
                                <Tool $italic $serif $fs={14}>I</Tool>
                                <Tool $under $bold>U</Tool>
                                <Tool $w={12}><Caret /></Tool>
                                <ToolSep $ml={5} />
                                <Tool $ml={3}><BorderIcon /></Tool>
                                <Tool $w={12}><Caret /></Tool>
                                <ToolSep $ml={5} />
                                <Tool $ml={4}><FillIcon /></Tool>
                                <Tool $w={12}><Caret /></Tool>
                                <Tool><FontColorIcon /></Tool>
                                <Tool $w={12}><Caret /></Tool>
                            </ToolRow>
                        </ToolRows>
                    </GroupBody>
                    <GroupFooter $launcher><span>Font</span><Launcher /></GroupFooter>
                </Group>
                <GroupSep />

                <Group $w={263}>
                    <GroupBody $pl={3}>
                        <ToolRows>
                            <ToolRow>
                                <Tool><Lines rows={[[1, 15, 2], [1, 15, 6]]} /></Tool>
                                <Tool $ml={1}><Lines rows={[[1, 15, 5], [1, 15, 8], [1, 15, 11]]} /></Tool>
                                <Tool $on><Lines rows={[[1, 15, 9], [1, 15, 12], [1, 15, 15]]} /></Tool>
                                <ToolSep $ml={4} />
                                <Slot $w={48} $ml={3}>
                                    <Tool><OrientIcon /></Tool>
                                    <Tool $w={12} $ml={-3}><Caret /></Tool>
                                </Slot>
                                <ToolSep $ml={1} />
                                <Tool $w={17} $ml={6}><WrapIcon /></Tool>
                                <ToolText $ml={3}>Wrap Text</ToolText>
                            </ToolRow>
                            <ToolRow>
                                <Tool><Lines rows={[[1, 15, 2], [1, 11, 6], [1, 15, 10], [1, 11, 14]]} /></Tool>
                                <Tool $ml={1}><Lines rows={[[1, 15, 2], [3, 13, 6], [1, 15, 10], [3, 13, 14]]} /></Tool>
                                <Tool><Lines rows={[[1, 15, 2], [5, 15, 6], [1, 15, 10], [5, 15, 14]]} /></Tool>
                                <ToolSep $ml={4} />
                                <Slot $w={48} $ml={3}>
                                    <Tool><IndentIcon /></Tool>
                                    <Tool><IndentIcon flip /></Tool>
                                </Slot>
                                <ToolSep $ml={1} />
                                <Tool $w={17} $ml={6}><MergeIcon /></Tool>
                                <ToolText $ml={3}>Merge &amp; Center</ToolText>
                                <Tool $w={12} $ml={8}><Caret /></Tool>
                            </ToolRow>
                        </ToolRows>
                    </GroupBody>
                    <GroupFooter $launcher><span>Alignment</span><Launcher /></GroupFooter>
                </Group>
                <GroupSep />

                <Group $w={139}>
                    <GroupBody $pl={5}>
                        <ToolRows>
                            <ToolRow>
                                <Combo $w={129}>General<Caret /></Combo>
                            </ToolRow>
                            <ToolRow>
                                <Tool $fs={16}>$</Tool>
                                <Tool $w={12} $ml={-1}><Caret /></Tool>
                                <Tool $fs={16}>%</Tool>
                                <Tool $bold $fs={14} $ml={-1} $pb={6}>,</Tool>
                                <ToolSep $ml={5} />
                                <Tool $ml={3}><DecimalIcon /></Tool>
                                <Tool><DecimalIcon more /></Tool>
                            </ToolRow>
                        </ToolRows>
                    </GroupBody>
                    <GroupFooter $launcher><span>Number</span><Launcher /></GroupFooter>
                </Group>
                <GroupSep />

                <Group $w={180}>
                    <GroupBody $pl={3}>
                        <LargeButton $w={74}>
                            <LargeIcon><CondFormatIcon /></LargeIcon>
                            Conditional
                            <LargeCaption>Formatting<Slot $w={7} $ml={3}><Caret /></Slot></LargeCaption>
                        </LargeButton>
                        <LargeButton $w={52}>
                            <LargeIcon><TableStyleIcon /></LargeIcon>
                            Format as
                            <LargeCaption>Table<Slot $w={7} $ml={3}><Caret /></Slot></LargeCaption>
                        </LargeButton>
                        <LargeButton $w={48}>
                            <LargeIcon><TableStyleIcon cell /></LargeIcon>
                            Cell
                            <LargeCaption>Styles<Slot $w={7} $ml={3}><Caret /></Slot></LargeCaption>
                        </LargeButton>
                    </GroupBody>
                    <GroupFooter><span>Styles</span></GroupFooter>
                </Group>
                <GroupSep />

                <Group $w={135}>
                    <GroupBody $pl={3}>
                        <LargeButton $w={42}>
                            <LargeIcon><InsertIcon /></LargeIcon>
                            Insert
                            <LargeCaption><Caret /></LargeCaption>
                        </LargeButton>
                        <LargeButton $w={42}>
                            <LargeIcon><DeleteIcon /></LargeIcon>
                            Delete
                            <LargeCaption><Caret /></LargeCaption>
                        </LargeButton>
                        <LargeButton $w={43}>
                            <LargeIcon><FormatIcon /></LargeIcon>
                            Format
                            <LargeCaption><Caret /></LargeCaption>
                        </LargeButton>
                    </GroupBody>
                    <GroupFooter><span>Cells</span></GroupFooter>
                </Group>
                <GroupSep />

                <Group $w={186}>
                    <GroupBody $pl={6}>
                        <SmallStack $w={89}>
                            <SmallRow><SmallIcon $w={16} $mr={4}><SigmaIcon /></SmallIcon>AutoSum<Slot $w={8} $ml={8}><Caret /></Slot></SmallRow>
                            <SmallRow><SmallIcon $w={16} $mr={4}><FillDownIcon /></SmallIcon>Fill<Slot $w={7} $ml={3}><Caret /></Slot></SmallRow>
                            <SmallRow><SmallIcon $w={16} $mr={4}><EraserIcon /></SmallIcon>Clear<Slot $w={7} $ml={3}><Caret /></Slot></SmallRow>
                        </SmallStack>
                        <LargeButton $w={43}>
                            <LargeIcon><SortFilterIcon /></LargeIcon>
                            Sort &amp;
                            <LargeCaption>Filter<Slot $w={7} $ml={3}><Caret /></Slot></LargeCaption>
                        </LargeButton>
                        <LargeButton $w={43}>
                            <LargeIcon><FindIcon /></LargeIcon>
                            Find &amp;
                            <LargeCaption>Select<Slot $w={7} $ml={3}><Caret /></Slot></LargeCaption>
                        </LargeButton>
                    </GroupBody>
                    <GroupFooter><span>Editing</span></GroupFooter>
                </Group>
                <GroupSep />

                <Collapse>
                    <svg width="10" height="6" viewBox="0 0 10 6" fill="none">
                        <path d="M1 5l4-4 4 4" stroke="#555" strokeWidth="1.4" />
                    </svg>
                </Collapse>
            </Ribbon>

            <FormulaRow>
                <NameBox>A1<Caret /></NameBox>
                <FormulaDots>
                    <svg width="3" height="12" viewBox="0 0 3 12">
                        <path d="M0 0h2v2H0zM0 5h2v2H0zM0 10h2v2H0z" fill="#aaa" />
                    </svg>
                </FormulaDots>
                <FormulaButtons>
                    <svg width="11" height="11" viewBox="0 0 11 11"><path d="M1 1l9 9M10 1l-9 9" stroke="#c0c0c0" strokeWidth="1.6" /></svg>
                    <svg width="13" height="11" viewBox="0 0 13 11" fill="none"><path d="M1 6l4 4 7-9" stroke="#c0c0c0" strokeWidth="1.6" /></svg>
                    <FxLabel>fx</FxLabel>
                </FormulaButtons>
                <FormulaInput>
                    Pending Screenshot Yatris: 337
                    <svg width="10" height="6" viewBox="0 0 10 6" fill="none"><path d="M1 1l4 4 4-4" stroke="#555" strokeWidth="1.4" /></svg>
                </FormulaInput>
            </FormulaRow>

            <SheetArea>
                <GridWrap>
                    <HeaderRow>
                        <Corner>
                            <svg width="11" height="11" viewBox="0 0 11 11"><path d="M11 0v11H0z" fill="#dcdcdc" /></svg>
                        </Corner>
                        {COLUMN_LETTERS.map((letter, i) => (
                            <ColHead key={i} $on={letter === 'A'}>{letter}</ColHead>
                        ))}
                    </HeaderRow>
                    <SheetBody>
                        <Row $h={20}>
                            <RowHead $on>1</RowHead>
                            <TitleCell>Pending Screenshot Yatris: 337</TitleCell>
                        </Row>
                        <Row $h={20}>
                            <RowHead>2</RowHead>
                            {HEADERS.map(([label, nudge]) => (
                                <Cell key={label} $nudge={nudge}>{label}</Cell>
                            ))}
                            <Cell $start $pl={3}>Scre</Cell>
                        </Row>
                        {ROWS.map((row, i) => (
                            <DataRow key={row.id} row={row} index={i + 3} />
                        ))}
                        <Selection />
                    </SheetBody>
                </GridWrap>
                <ScrollCol>
                    <ScrollBtn><Caret c="#666" up /></ScrollBtn>
                    <ScrollBtn $h={17} />
                    <ScrollBtn $end><Caret c="#666" /></ScrollBtn>
                </ScrollCol>
            </SheetArea>

            <SheetTabs>
                <NavArrows>
                    <svg width="5" height="9" viewBox="0 0 5 9"><path d="M5 0v9L0 4.5z" fill="#bbb" /></svg>
                    <svg width="5" height="9" viewBox="0 0 5 9"><path d="M0 0v9l5-4.5z" fill="#bbb" /></svg>
                </NavArrows>
                <SheetTab>Pending Screenshot Yatris List</SheetTab>
                <AddSheet>
                    <svg width="16" height="16" viewBox="0 0 16 16" fill="none">
                        <circle cx="8" cy="8" r="7.3" stroke="#777" />
                        <path d="M8 4v8M4 8h8" stroke="#777" strokeWidth="1.5" />
                    </svg>
                </AddSheet>
                <TabDots>
                    <svg width="3" height="11" viewBox="0 0 3 11"><path d="M0 0h2v2H0zM0 4h2v2H0zM0 8h2v2H0z" fill="#999" /></svg>
                </TabDots>
                <HScroll>
                    <HBtn><svg width="5" height="9" viewBox="0 0 5 9"><path d="M5 0v9L0 4.5z" fill="#666" /></svg></HBtn>
                    <HThumb />
                    <HBtn><svg width="5" height="9" viewBox="0 0 5 9"><path d="M0 0v9l5-4.5z" fill="#666" /></svg></HBtn>
                </HScroll>
            </SheetTabs>

            <StatusBar>
                READY
                <ViewButton $on $ml={1035}><SmallGridIcon /></ViewButton>
                <ViewButton><PageLayoutIcon /></ViewButton>
                <ViewButton><PageBreakIcon /></ViewButton>
                <ZoomSlider>
                    <ZoomSign>-</ZoomSign>
                    <ZoomTrack />
                    <ZoomSign>+</ZoomSign>
                </ZoomSlider>
                <ZoomValue>100%</ZoomValue>
            </StatusBar>

            <Taskbar>
                <StartSlot><WinLogo /></StartSlot>
                <TaskButton $open><ExplorerIcon /></TaskButton>
                <TaskButton $ml={4}><SublimeIcon /></TaskButton>
                <TaskButton $open $ml={4}><ChromeIcon /></TaskButton>
                <TaskButton $active $ml={4}><ExcelTaskIcon /></TaskButton>
                <Tray>
                    <KeyboardIcon />
                    <TraySlot $ml={14}><Caret c="#fff" up /></TraySlot>
                    <TraySlot $ml={14}><SpeakerIcon /></TraySlot>
                    <TraySlot $ml={10}><FlagIcon /></TraySlot>
                    <Clock>
                        <div>12:59 PM</div>
                        <div>26-Apr-24</div>
                    </Clock>
                </Tray>
            </Taskbar>

            <Watermark>
                <WatermarkTitle>Activate Windows</WatermarkTitle>
                <WatermarkText>Go to PC settings to activate Windows.</WatermarkText>
            </Watermark>
        </Page>
    );
};

export default App;
